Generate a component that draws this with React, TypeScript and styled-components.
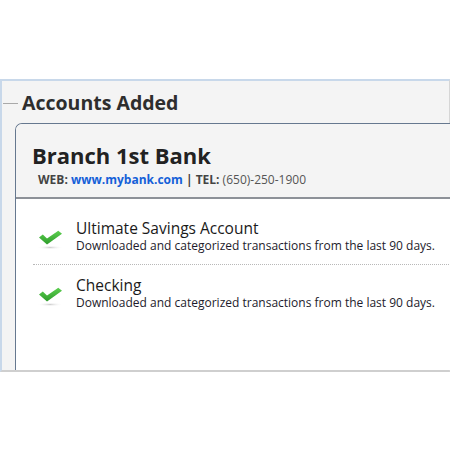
import React from 'react';
import styled, { createGlobalStyle } from 'styled-components';

const GlobalStyle = createGlobalStyle`
  html, body {
    margin: 0;
    padding: 0;
    background: #ffffff;
  }
  body {
    font-family: "Open Sans", "Noto Sans", sans-serif;
  }
`;

const Page = styled.div`
  width: 450px;
  height: 450px;
  padding-top: 79px;
  box-sizing: border-box;
  overflow: hidden;
`;

const Panel = styled.div`
  height: 293px;
  box-sizing: border-box;
  background: #f4f4f4;
  border-top: 2px solid #c8d8ea;
  border-left: 2px solid #c8d8ea;
  border-right: 1px solid #d6d6d6;
  border-bottom: 2px solid #cfcfcf;
  display: flex;
  flex-direction: column;
`;

const LegendRow = styled.div`
  display: flex;
  align-items: center;
  height: 42px;
  padding-left: 1px;
`;

const LegendLine = styled.div`
  width: 15px;
  height: 1px;
  background: #a9a9a9;
  margin-right: 4px;
  margin-top: 2px;
`;

const Legend = styled.h2`
  margin: 0;
  font-size: 19.5px;
  font-weight: 700;
  color: #2e2e2e;
`;

const Card = styled.div`
  flex: 1;
  margin-left: 13px;
  margin-right: -4px;
  border-top: 1.5px solid #66788f;
  border-left: 1.5px solid #66788f;
  border-top-left-radius: 7px;
  display: flex;
  flex-direction: column;
  overflow: hidden;
`;

const CardHeader = styled.div`
  height: 75px;
  box-sizing: border-box;
  padding: 17px 0 0 16px;
  background: #f4f4f4;
  border-bottom: 2px solid #8d9198;
`;

const BankName = styled.div`
  font-size: 22px;
  font-weight: 700;
  color: #222222;
  line-height: 28px;
`;

const Contact = styled.div`
  margin-top: 3px;
  padding-left: 6px;
  font-size: 12px;
  color: #555555;
  line-height: 15px;
`;

const Label = styled.b`
  color: #444444;
`;

const Link = styled.a`
  color: #1560d8;
  font-weight: 700;
  text-decoration: none;
`;

const CardBody = styled.div`
  flex: 1;
  background: #ffffff;
  padding: 19px 0 0 17px;
`;

const Item = styled.div<{ divider?: boolean }>`
  display: flex;
  align-items: flex-start;
  padding: ${(p) => (p.divider ? '0 0 9px 0' : '10px 0 0 0')};
  border-bottom: ${(p) => (p.divider ? '1px dotted #b8b8b8' : 'none')};
`;

const CheckWrap = styled.div`
  width: 39px;
  padding: 12px 0 0 4px;
  flex-shrink: 0;
`;

const ItemText = styled.div`
  display: flex;
  flex-direction: column;
`;

const ItemTitle = styled.div`
  font-size: 15.5px;
  color: #1a1a1a;
  line-height: 20px;
`;

const ItemDesc = styled.div`
  font-size: 12px;
  color: #1d1b2c;
  line-height: 16px;
`;

function Check() {
  return (
    <svg width="30" height="20" viewBox="0 0 30 20">
      <defs>
        <linearGradient id="ck" x1="0" y1="0" x2="0" y2="1">
          <stop offset="0" stopColor="#5ccf4f" />
          <stop offset="1" stopColor="#2e9c2b" />
        </linearGradient>
        <radialGradient id="sh" cx="0.5" cy="0.5" r="0.5">
          <stop offset="0" stopColor="#cfcfcf" />
          <stop offset="1" stopColor="#ffffff" stopOpacity="0" />
        </radialGradient>
      </defs>
      <ellipse cx="13" cy="17.5" rx="13" ry="2" fill="url(#sh)" />
      <path
        d="M2 7.5 L5.8 4.6 L10 8.6 L21.3 0.8 L25 3.8 L10 14.5 Z"
        fill="url(#ck)"
      />
    </svg>
  );
}

type AccountProps = {
  name: string;
  divider?: boolean;
};

function Account({ name, divider }: AccountProps) {
  return (
    <Item divider={divider}>
      <CheckWrap>
        <Check />
      </CheckWrap>
      <ItemText>
        <ItemTitle>{name}</ItemTitle>
        <ItemDesc>Downloaded and categorized transactions from the last 90 days.</ItemDesc>
      </ItemText>
    </Item>
  );
}

export default function App() {
  return (
    <Page>
      <GlobalStyle />
      <Panel>
        <LegendRow>
          <LegendLine />
          <Legend>Accounts Added</Legend>
        </LegendRow>
        <Card>
          <CardHeader>
            <BankName>Branch 1st Bank</BankName>
            <Contact>
              <Label>WEB:</Label> <Link href="#">www.mybank.com</Link> <Label>|</Label>{' '}
              <Label>TEL:</Label> (650)-250-1900
            </Contact>
          </CardHeader>
          <CardBody>
            <Account name="Ultimate Savings Account" divider />
            <Account name="Checking" />
          </CardBody>
        </Card>
      </Panel>
    </Page>
  );
}
